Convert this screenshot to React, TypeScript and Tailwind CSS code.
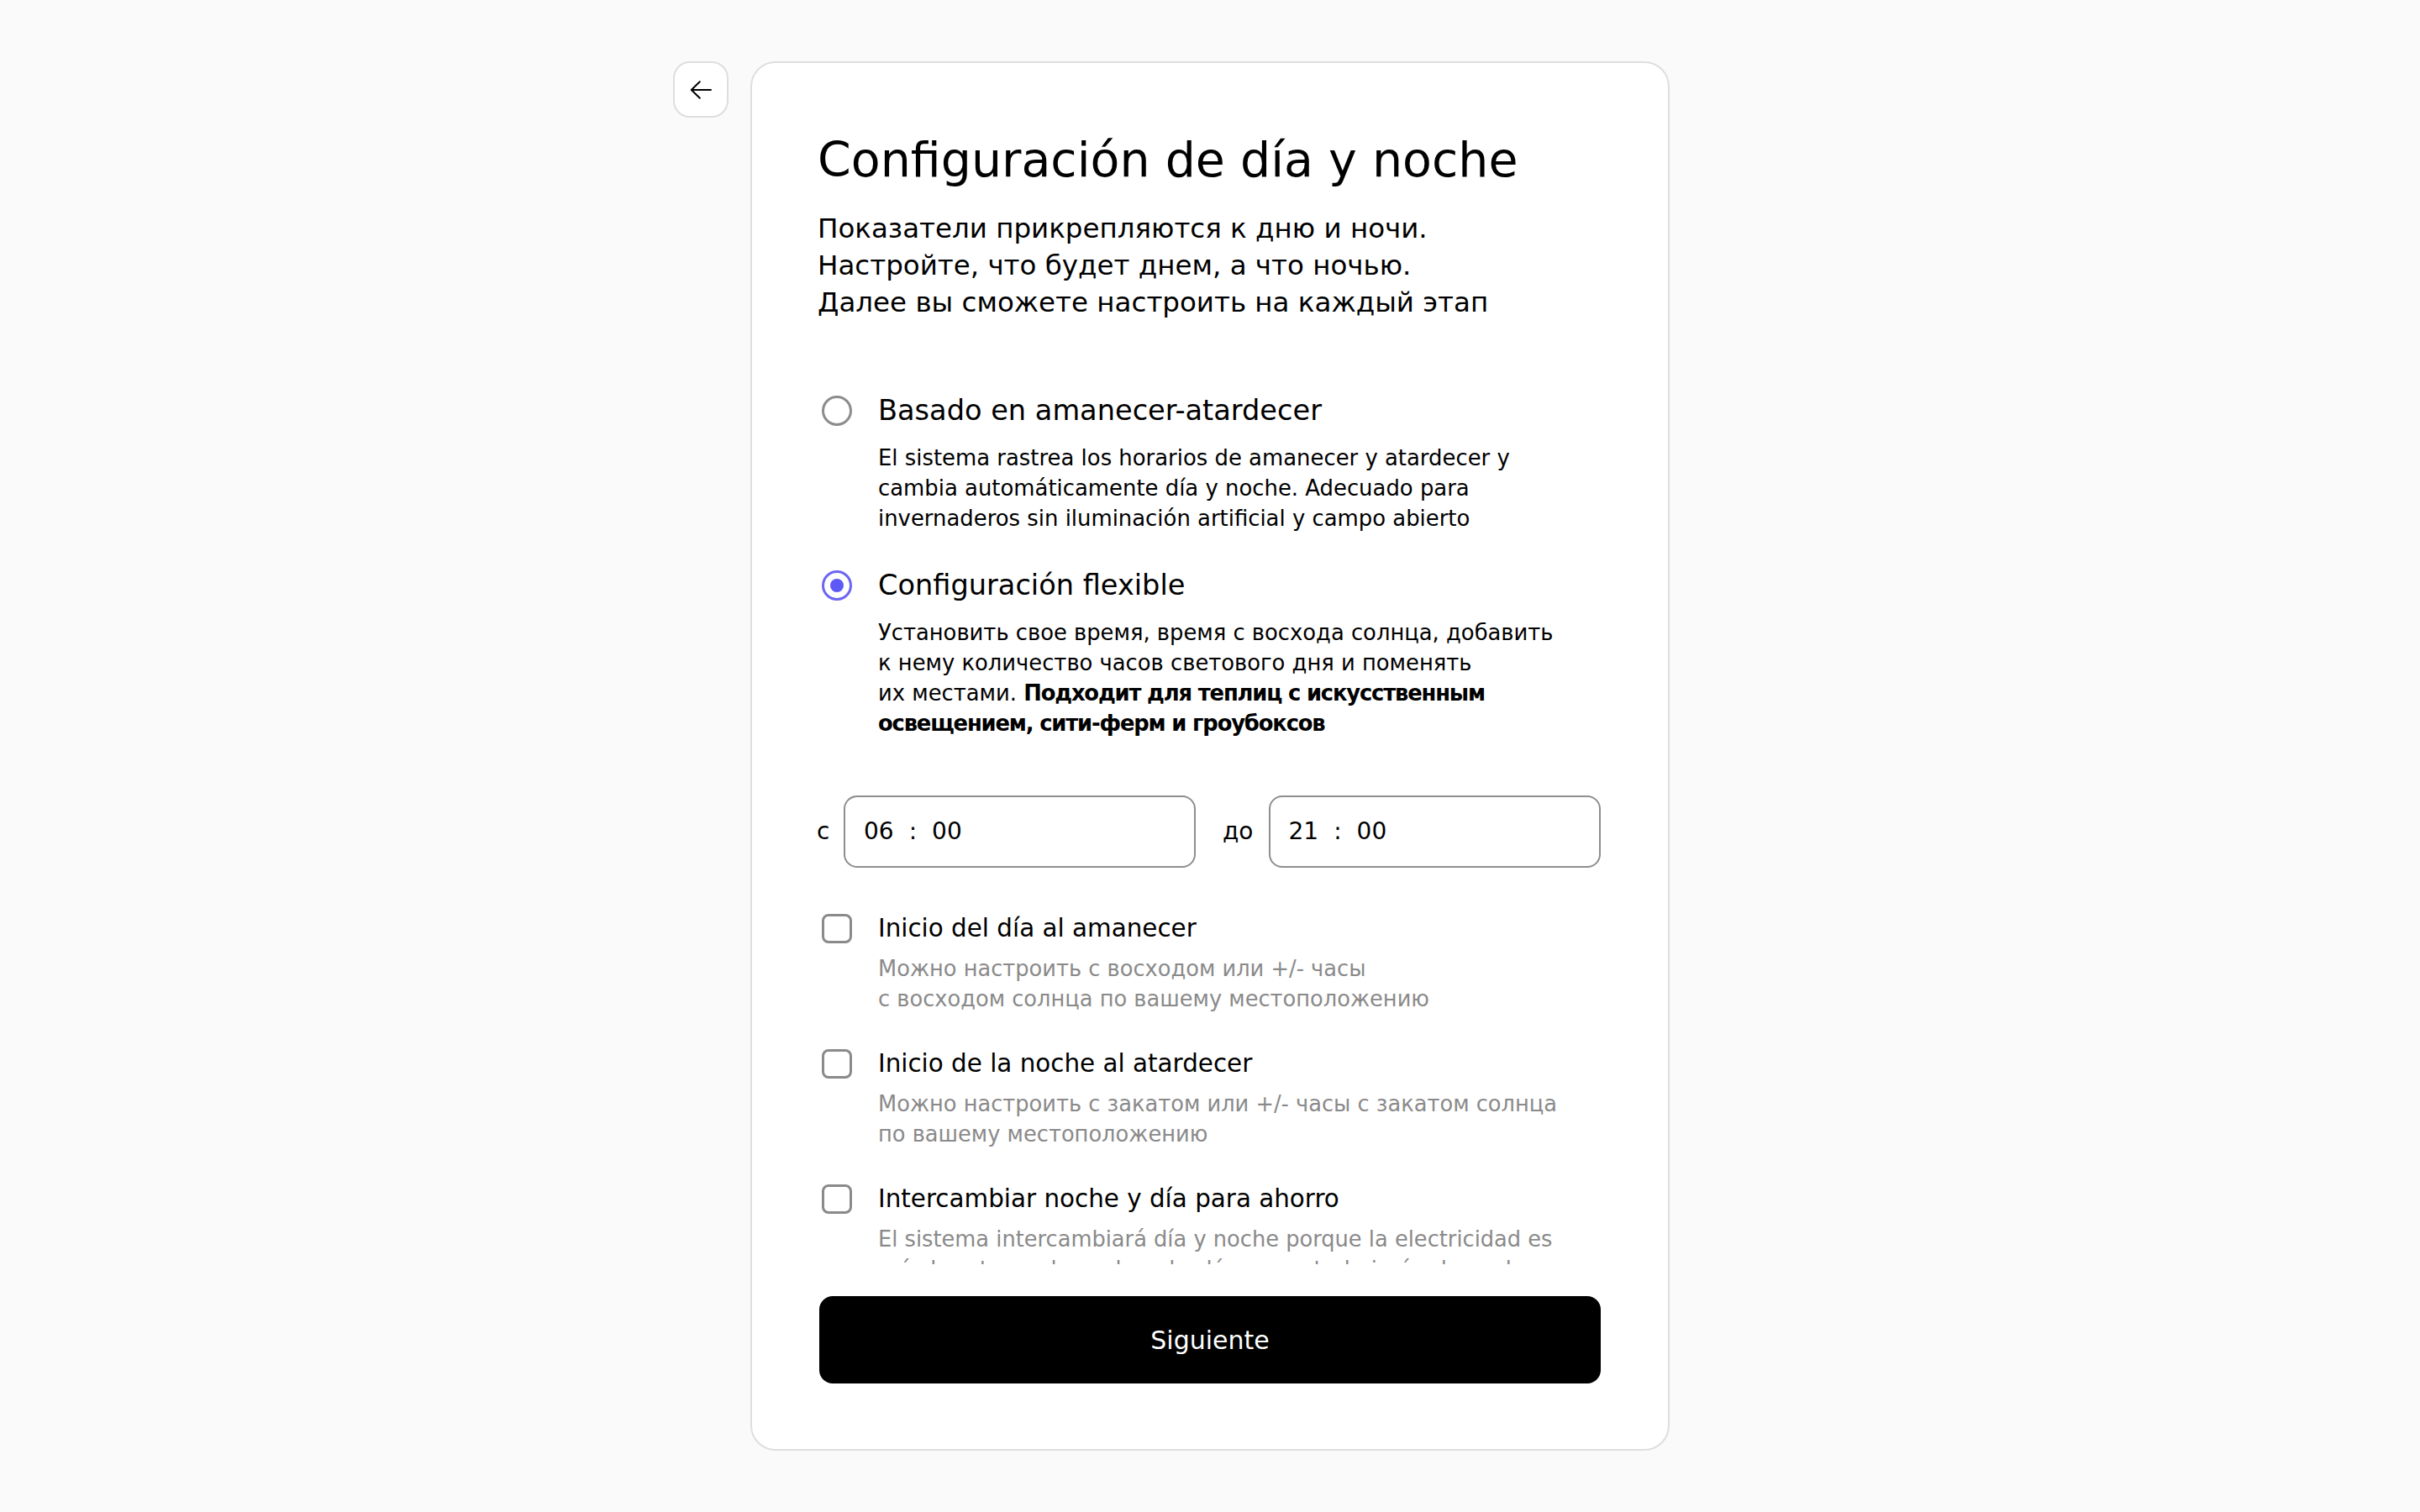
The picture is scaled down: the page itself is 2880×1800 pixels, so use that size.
import React from 'react';

const FONT = '"DejaVu Sans", "Noto Sans", sans-serif';

type CheckItem = {
  label: string;
  lines: string[];
};

const CHECK_ITEMS: CheckItem[] = [
  {
    label: 'Inicio del día al amanecer',
    lines: ['Можно настроить с восходом или +/- часы', 'с восходом солнца по вашему местоположению'],
  },
  {
    label: 'Inicio de la noche al atardecer',
    lines: ['Можно настроить с закатом или +/- часы с закатом солнца', 'по вашему местоположению'],
  },
  {
    label: 'Intercambiar noche y día para ahorro',
    lines: [
      'El sistema intercambiará día y noche porque la electricidad es',
      'más barata por la noche y las lámparas trabajarán de noche',
    ],
  },
];

const Radio = ({ checked }: { checked: boolean }) => (
  <div
    className={`ml-[3px] flex h-[36px] w-[36px] items-center justify-center rounded-full border-[3px] ${
      checked ? 'border-[#6c66f2]' : 'border-[#8c8c8c]'
    }`}
  >
    {checked && <div className="h-[16px] w-[16px] rounded-full bg-[#5d59f4]" />}
  </div>
);

const TimeField = ({ h, m, className }: { h: string; m: string; className: string }) => (
  <div
    className={`flex h-[86px] items-center gap-[18px] rounded-[16px] border-2 border-[#8e8e8e] pl-[22px] text-[28px] text-black ${className}`}
  >
    <span>{h}</span>
    <span>:</span>
    <span>{m}</span>
  </div>
);

export default function App() {
  const [mode, setMode] = React.useState<'sun' | 'flex'>('flex');
  const [checks, setChecks] = React.useState<boolean[]>([false, false, false]);

  return (
    <div className="min-h-screen bg-[#fafafa] text-black" style={{ fontFamily: FONT }}>
      <div className="grid grid-cols-[1fr_auto_1fr] pt-[73px]">
        {/* Back */}
        <div className="flex justify-end pr-[26px]">
          <button className="flex h-[67px] w-[66px] items-center justify-center rounded-[20px] border-2 border-[#dedede] bg-white">
            <svg width="26" height="22" viewBox="0 0 13 11" fill="none">
              <path d="M12.5 5.5H0.9M5.9 0.6L0.9 5.5L5.9 10.4" stroke="#000" strokeWidth="1" strokeLinecap="round" strokeLinejoin="round" />
            </svg>
          </button>
        </div>

        {/* Card */}
        <div className="flex h-[1654px] w-[1094px] flex-col rounded-[30px] border-2 border-[#dedede] bg-white px-[80px] pb-[78px] pt-[79px]">
          <div className="-ml-[6px] flex-1 overflow-hidden pl-[6px]">
            <h1 className="-ml-[2px] text-[57px] font-normal leading-[72px]">Configuración de día y noche</h1>
            <p className="-ml-[2px] mt-[24px] text-[32.5px] leading-[44px]">
              Показатели прикрепляются к дню и ночи.
              <br />
              Настройте, что будет днем, а что ночью.
              <br />
              Далее вы сможете настроить на каждый этап
            </p>

            {/* Mode radios */}
            <div className="mt-[85px]">
              <div className="cursor-pointer" onClick={() => setMode('sun')}>
                <div className="flex items-center">
                  <div className="w-[70px]">
                    <Radio checked={mode === 'sun'} />
                  </div>
                  <span className="text-[33.6px] leading-[44px]">Basado en amanecer-atardecer</span>
                </div>
                <p className="mt-[16px] whitespace-nowrap pl-[70px] text-[25.9px] leading-[36px]">
                  El sistema rastrea los horarios de amanecer y atardecer y
                  <br />
                  cambia automáticamente día y noche. Adecuado para
                  <br />
                  invernaderos sin iluminación artificial y campo abierto
                </p>
              </div>

              <div className="mt-[40px] cursor-pointer" onClick={() => setMode('flex')}>
                <div className="flex items-center">
                  <div className="w-[70px]">
                    <Radio checked={mode === 'flex'} />
                  </div>
                  <span className="text-[33.6px] leading-[44px]">Configuración flexible</span>
                </div>
                <p className="mt-[16px] whitespace-nowrap pl-[70px] text-[25.8px] leading-[36px]">
                  Установить свое время, время с восхода солнца, добавить
                  <br />
                  к нему количество часов светового дня и поменять
                  <br />
                  их местами. <b className="font-bold tracking-[-0.045em]">Подходит для теплиц с искусственным</b>
                  <br />
                  <b className="font-bold tracking-[-0.045em]">освещением, сити-ферм и гроубоксов</b>
                </p>
              </div>
            </div>

            {/* Time range */}
            <div className="mt-[68px] flex items-center text-[28px]">
              <span className="-ml-[3px] w-[32px]">с</span>
              <TimeField h="06" m="00" className="w-[419px]" />
              <span className="pl-[32px] pr-[18px]">до</span>
              <TimeField h="21" m="00" className="flex-1" />
            </div>

            {/* Options */}
            <div className="mt-[52px] flex flex-col gap-[39px]">
              {CHECK_ITEMS.map((item, i) => (
                <div
                  key={item.label}
                  className="cursor-pointer"
                  onClick={() => setChecks(checks.map((c, j) => (j === i ? !c : c)))}
                >
                  <div className="flex items-center">
                    <div className="w-[70px]">
                      <div
                        className={`ml-[3px] h-[35px] w-[36px] rounded-[8px] border-[3px] border-[#8a8a8a] ${
                          checks[i] ? 'bg-[#5d59f4]' : 'bg-white'
                        }`}
                      />
                    </div>
                    <span className="text-[29.4px] leading-[40px]">{item.label}</span>
                  </div>
                  <p className="mt-[10px] whitespace-nowrap pl-[70px] text-[25.7px] leading-[36px] text-[#8a8a8a]">
                    {item.lines.map((line, k) => (
                      <React.Fragment key={k}>
                        {k > 0 && <br />}
                        {line}
                      </React.Fragment>
                    ))}
                  </p>
                </div>
              ))}
            </div>
          </div>

          <button className="mt-[38px] h-[104px] w-full shrink-0 rounded-[16px] bg-black text-[30px] text-white">
            Siguiente
          </button>
        </div>

        <div />
      </div>
    </div>
  );
}
